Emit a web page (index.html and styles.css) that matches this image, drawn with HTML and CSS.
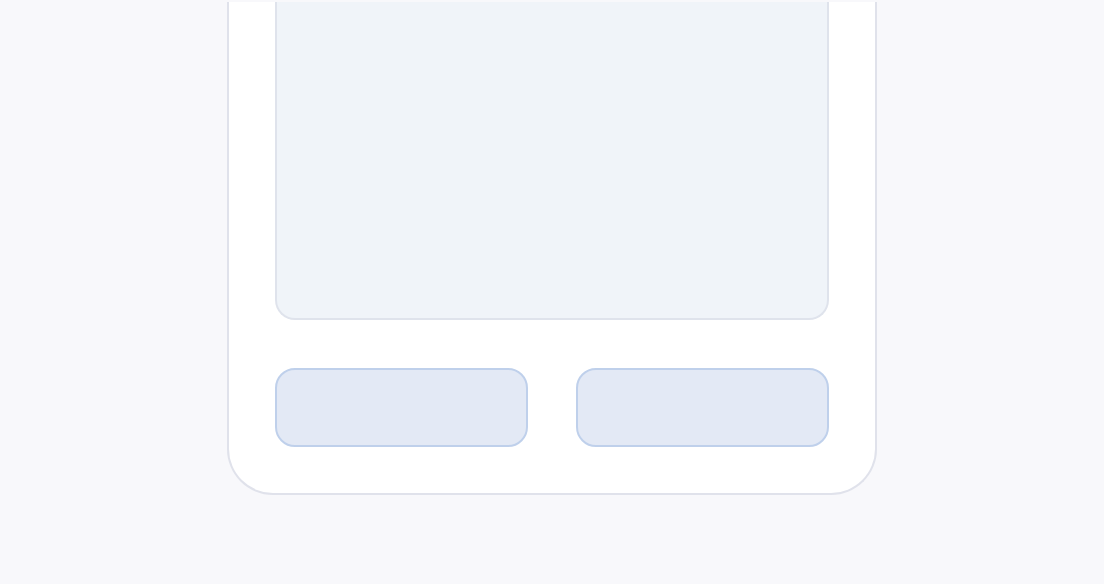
FILE: index.html
```html
<!DOCTYPE html>
<html lang="en">
<head>
<meta charset="utf-8">
<title>Card</title>
<link rel="stylesheet" href="styles.css">
</head>
<body>
  <div class="top-edge"></div>
  <main class="card">
    <section class="preview"></section>
    <div class="actions">
      <button class="action" type="button"></button>
      <button class="action" type="button"></button>
    </div>
  </main>
</body>
</html>
```

FILE: styles.css
```css
* {
  box-sizing: border-box;
}

html,
body {
  margin: 0;
  padding: 0;
  background: #f8f8fb;
  font-family: "Inter", "Liberation Sans", sans-serif;
}

.top-edge {
  height: 2px;
  background: #f8f8fb;
}

.card {
  width: 650px;
  margin: 0 auto;
  background: #ffffff;
  border: 2px solid #e0e2eb;
  border-top: none;
  border-radius: 0 0 46px 46px;
  padding: 0 46px 46px;
}

.preview {
  height: 318px;
  background: #f0f4f9;
  border: 2px solid #dfe3ec;
  border-top: none;
  border-radius: 0 0 20px 20px;
}

.actions {
  display: grid;
  grid-template-columns: 1fr 1fr;
  column-gap: 48px;
  margin-top: 48px;
}

.action {
  height: 79px;
  margin: 0;
  padding: 0;
  background: #e3e9f5;
  border: 2px solid #bfd0eb;
  border-radius: 20px;
  cursor: pointer;
}
```
